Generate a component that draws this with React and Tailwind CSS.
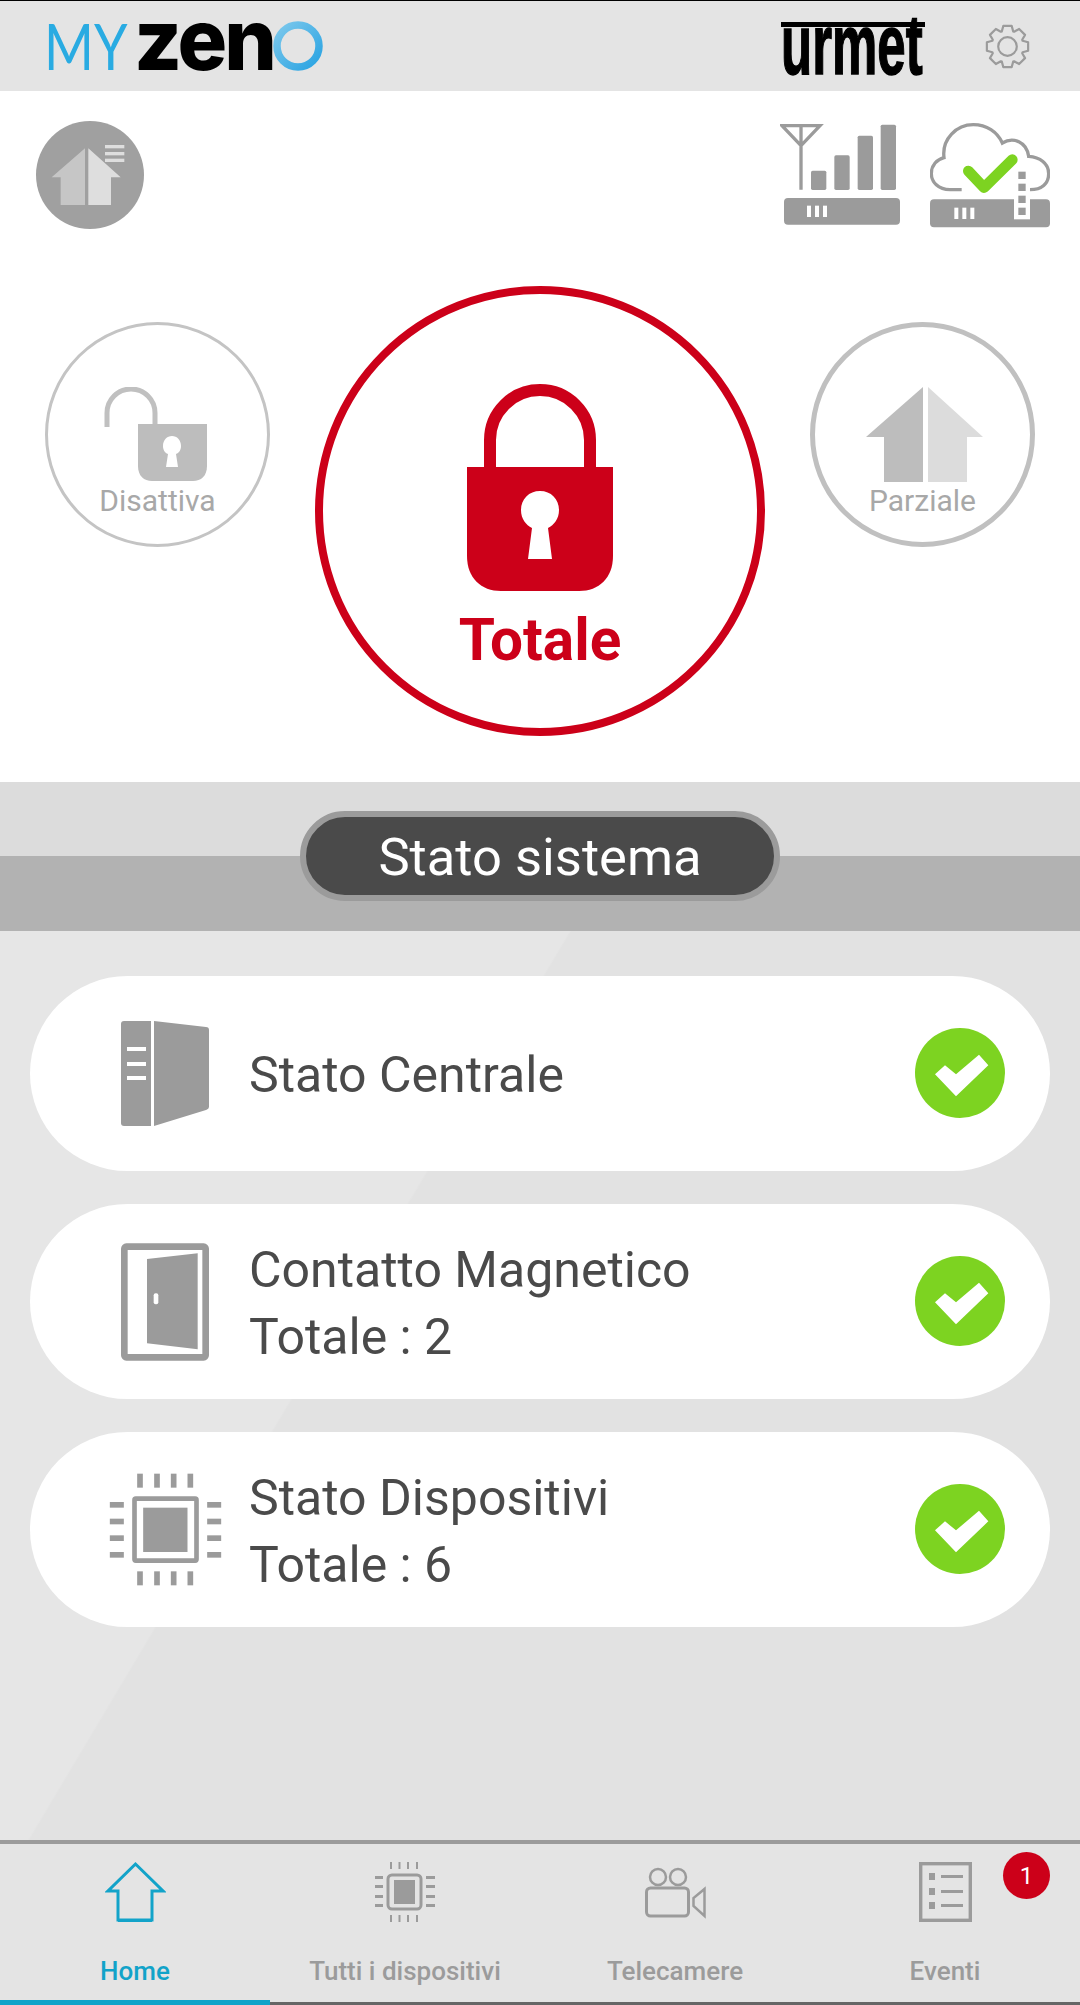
import React from 'react';

const GRAY = '#9b9b9b';
const RED = '#cc0019';

// gear outline, 8 teeth
const gearPoints = () => {
  const pts = [];
  for (let i = 0; i < 8; i++) {
    const a = (i * Math.PI) / 4 - Math.PI / 2;
    const step = [
      [-0.36, 16.5],
      [-0.2, 21.5],
      [0.2, 21.5],
      [0.36, 16.5],
    ];
    step.forEach(([d, r]) => {
      pts.push(`${(24 + r * Math.cos(a + d)).toFixed(2)},${(24 + r * Math.sin(a + d)).toFixed(2)}`);
    });
  }
  return pts.join(' ');
};

const Logo = () => (
  <div className="flex items-center">
    <span className="block w-[90px] origin-left scale-x-[0.84] font-['Lato',sans-serif] text-[64px] leading-none text-[#29abe2] whitespace-nowrap">MY</span>
    <span className="block w-[139px] origin-left scale-x-[0.975] font-['Inter',sans-serif] font-extrabold text-[85px] leading-none tracking-[-3px] text-black -mt-[13px] whitespace-nowrap">zen</span>
    <svg viewBox="0 0 50 50" className="w-[50px] h-[50px]">
      <defs>
        <linearGradient id="ring" x1="0" y1="0" x2="1" y2="1">
          <stop offset="0" stopColor="#7cc8ec" />
          <stop offset="1" stopColor="#29a3e2" />
        </linearGradient>
      </defs>
      <circle cx="25" cy="25" r="21" fill="none" stroke="url(#ring)" strokeWidth="7.5" />
    </svg>
  </div>
);

const UrmetLogo = () => (
  <div className="relative w-[148px] h-[62px]">
    <div className="absolute left-0 top-[7px] w-[144px] h-[5px] bg-black" />
    <span className="absolute left-0 bottom-[-10px] origin-bottom-left scale-x-[0.6] font-['Liberation_Sans',sans-serif] font-bold text-[85px] leading-none text-black whitespace-nowrap [-webkit-text-stroke:1.5px_black]">
      urmet
    </span>
  </div>
);

const HomeBadge = () => (
  <svg viewBox="48 363 324 324" className="w-[108px] h-[108px]">
    <circle cx="210" cy="525" r="162" fill="#a0a0a0" />
    <polygon points="195,445 95,532 122,532 122,615 195,615" fill="#c6c6c6" />
    <polygon points="205,445 302,532 273,532 273,615 205,615" fill="#dedede" />
    <rect x="255" y="435" width="58" height="10" fill="#dedede" />
    <rect x="255" y="456" width="58" height="10" fill="#dedede" />
    <rect x="255" y="476" width="58" height="10" fill="#dedede" />
  </svg>
);

const SignalIcon = () => (
  <svg viewBox="60 70 360 315" className="w-[120px] h-[105px]">
    <path d="M66 78 H180 L123 138 Z M123 78 V270" fill="none" stroke={GRAY} strokeWidth="10" />
    <rect x="153" y="213" width="46" height="58" rx="5" fill={GRAY} />
    <rect x="223" y="167" width="46" height="104" rx="5" fill={GRAY} />
    <rect x="293" y="108" width="46" height="163" rx="5" fill={GRAY} />
    <rect x="362" y="75" width="46" height="196" rx="5" fill={GRAY} />
    <rect x="72" y="295" width="348" height="80" rx="12" fill={GRAY} />
    <rect x="141" y="318" width="12" height="34" fill="#fff" />
    <rect x="165" y="318" width="12" height="34" fill="#fff" />
    <rect x="189" y="318" width="12" height="34" fill="#fff" />
  </svg>
);

const CloudIcon = () => (
  <svg viewBox="510 68 360 315" className="w-[120px] h-[105px]">
    <path
      d="M605 268 H570 C535 268 514 245 514 220 C514 195 530 178 552 172 C545 115 590 73 640 73 C680 73 712 95 727 128 C760 108 800 125 806 168 C840 170 866 190 866 220 C866 250 845 268 810 268"
      fill="none"
      stroke={GRAY}
      strokeWidth="10"
    />
    <rect x="510" y="297" width="360" height="84" rx="12" fill={GRAY} />
    <rect x="583" y="322" width="12" height="34" fill="#fff" />
    <rect x="607" y="322" width="12" height="34" fill="#fff" />
    <rect x="631" y="322" width="12" height="34" fill="#fff" />
    <path d="M625 212 L672 262 L757 178" fill="none" stroke="#7dd321" strokeWidth="32" strokeLinejoin="round" strokeLinecap="round" />
    <rect x="762" y="205" width="48" height="152" fill="#fff" />
    <rect x="775" y="214" width="22" height="22" fill={GRAY} />
    <rect x="775" y="250" width="22" height="22" fill={GRAY} />
    <rect x="775" y="286" width="22" height="22" fill={GRAY} />
    <rect x="775" y="322" width="22" height="22" fill={GRAY} />
  </svg>
);

const BigLock = () => (
  <svg viewBox="468 384 146 207" className="w-[146px] h-[207px]">
    <path d="M491 470 V440 A50 50 0 0 1 591 440 V470" fill="none" stroke={RED} strokeWidth="12" />
    <path d="M468 467 H614 V556 C614 578 600 591 580 591 H502 C482 591 468 578 468 556 Z" fill={RED} />
    <path d="M541 491 C530 491 522 499 522 510 C522 519 527 525 533 528 L529 559 H553 L549 528 C555 525 560 519 560 510 C560 499 552 491 541 491 Z" fill="#fff" />
  </svg>
);

const OpenLock = () => (
  <svg viewBox="49 387 217 96" className="w-[217px] h-[96px]">
    <path d="M107 427 V413 A24 24 0 0 1 155 413 V426" fill="none" stroke="#c0c0c0" strokeWidth="5" />
    <path d="M138 424 H207 V466 C207 476 201 481 193 481 H152 C144 481 138 476 138 466 Z" fill="#bdbdbd" />
    <path d="M172 436 C167 436 163 440 163 446 C163 450 165 453 168 454 L166 467 H178 L176 454 C179 453 181 450 181 446 C181 440 177 436 172 436 Z" fill="#fff" />
  </svg>
);

const HalfHouse = () => (
  <svg viewBox="816 387 213 96" className="w-[213px] h-[96px]">
    <polygon points="923,387 866,437 884,437 884,482 923,482" fill="#bdbdbd" />
    <polygon points="928,387 983,437 967,437 967,482 928,482" fill="#dcdcdc" />
  </svg>
);

const ServerIcon = () => (
  <svg viewBox="121 1021 88 105" className="w-[88px] h-[105px]">
    <path d="M124 1021 H151 V1126 H124 Q121 1126 121 1123 V1024 Q121 1021 124 1021 Z" fill={GRAY} />
    <path d="M154 1021 L206 1027 Q209 1027 209 1030 V1107 Q209 1109 206 1110 L154 1126 Z" fill={GRAY} />
    <rect x="127" y="1047" width="19" height="4" fill="#fff" />
    <rect x="127" y="1062" width="19" height="4" fill="#fff" />
    <rect x="127" y="1076" width="19" height="4" fill="#fff" />
  </svg>
);

const DoorIcon = () => (
  <svg viewBox="124 187 264 354" className="w-[88px] h-[118px]">
    <rect x="134" y="198" width="244" height="332" rx="6" fill="none" stroke={GRAY} strokeWidth="20" />
    <polygon points="202,235 354,218 354,506 202,488" fill={GRAY} />
    <rect x="222" y="338" width="14" height="33" rx="6" fill="#fff" />
  </svg>
);

const ChipIcon = () => {
  const xs = [172, 223, 273, 323];
  const ys = [965, 1015, 1065, 1115];
  return (
    <svg viewBox="88 878 338 339" className="w-[113px] h-[113px]">
      <rect x="164" y="955" width="186" height="186" rx="4" fill="none" stroke={GRAY} strokeWidth="14" />
      <rect x="190" y="982" width="133" height="133" fill={GRAY} />
      {xs.map((x) => (
        <React.Fragment key={x}>
          <rect x={x} y="880" width="17" height="42" fill={GRAY} />
          <rect x={x} y="1173" width="17" height="42" fill={GRAY} />
        </React.Fragment>
      ))}
      {ys.map((y) => (
        <React.Fragment key={y}>
          <rect x="90" y={y} width="42" height="17" fill={GRAY} />
          <rect x="382" y={y} width="42" height="17" fill={GRAY} />
        </React.Fragment>
      ))}
    </svg>
  );
};

const CheckBadge = () => (
  <svg viewBox="105 83 270 270" className="w-[90px] h-[90px] shrink-0 -mt-[2px]">
    <circle cx="240" cy="218" r="135" fill="#7dd321" />
    <polygon points="165,222 195,195 228,222 297,163 325,195 228,288" fill="#fff" />
  </svg>
);

const StatusRow = ({ icon, lines }) => (
  <div className="flex items-center h-[195px] rounded-[98px] bg-white pl-[70px] pr-[45px]">
    <div className="w-[130px] flex items-center justify-center shrink-0">{icon}</div>
    <div className="ml-[19px] flex-1 pt-[4px] text-[50px] leading-[67px] text-[#4a4a4a]">
      {lines.map((l) => (
        <div key={l}>{l}</div>
      ))}
    </div>
    <CheckBadge />
  </div>
);

const NavHome = () => (
  <svg viewBox="105 1861 61 62" className="w-[61px] h-[62px]">
    <path d="M135.5 1864 L108 1891 H118 V1920 H152 V1891 H163 Z" fill="none" stroke="#12a3c9" strokeWidth="3" />
    <rect x="118" y="1919" width="34" height="3" fill="#12a3c9" />
  </svg>
);

const NavChip = () => {
  const xs = [390, 398.5, 407, 416];
  const ys = [1876, 1885, 1895, 1904];
  return (
    <svg viewBox="375 1862 60 60" className="w-[60px] h-[60px]">
      <rect x="388" y="1875" width="33" height="34" rx="4" fill="none" stroke={GRAY} strokeWidth="3" />
      <rect x="394" y="1880" width="21" height="24" fill={GRAY} />
      {xs.map((x) => (
        <React.Fragment key={x}>
          <rect x={x} y="1862" width="2" height="7" fill={GRAY} />
          <rect x={x} y="1915" width="2" height="7" fill={GRAY} />
        </React.Fragment>
      ))}
      {ys.map((y) => (
        <React.Fragment key={y}>
          <rect x="375" y={y} width="8" height="3" fill={GRAY} />
          <rect x="426" y={y} width="9" height="3" fill={GRAY} />
        </React.Fragment>
      ))}
    </svg>
  );
};

const NavCamera = () => (
  <svg viewBox="645 1862 61 60" className="w-[61px] h-[60px]">
    <circle cx="658" cy="1877" r="8" fill="none" stroke={GRAY} strokeWidth="2.5" />
    <circle cx="678" cy="1877" r="8" fill="none" stroke={GRAY} strokeWidth="2.5" />
    <rect x="646.5" y="1888" width="42" height="28" rx="4" fill="none" stroke={GRAY} strokeWidth="3" />
    <path d="M704.5 1889 V1916 L693.5 1906 V1898 Z" fill="none" stroke={GRAY} strokeWidth="2.5" />
  </svg>
);

const NavEvents = () => (
  <svg viewBox="918 1862 53 60" className="w-[53px] h-[60px]">
    <rect x="919.7" y="1863.7" width="49.6" height="56.6" fill="none" stroke={GRAY} strokeWidth="3.4" />
    {[1873, 1888, 1902].map((y) => (
      <React.Fragment key={y}>
        <rect x="928" y={y} width="6" height="7" fill={GRAY} />
        <rect x="940" y={y + 2} width="22" height="3" fill={GRAY} />
      </React.Fragment>
    ))}
  </svg>
);

const tabs = [
  { label: 'Home', icon: <NavHome />, active: true },
  { label: 'Tutti i dispositivi', icon: <NavChip /> },
  { label: 'Telecamere', icon: <NavCamera /> },
  { label: 'Eventi', icon: <NavEvents />, badge: '1' },
];

export default function App() {
  return (
    <div className="flex flex-col w-[1080px] h-[2005px] overflow-hidden bg-white font-['Roboto',sans-serif]">
      {/* header */}
      <header className="flex items-center h-[91px] shrink-0 border-t border-black bg-[#e4e4e4] pl-[44px] pr-[49px]">
        <Logo />
        <div className="ml-auto flex items-center gap-[60px]">
          <UrmetLogo />
          <svg viewBox="0 0 48 48" className="w-[47px] h-[47px] -ml-[5px]">
            <polygon points={gearPoints()} fill="none" stroke={GRAY} strokeWidth="2.2" strokeLinejoin="round" />
            <circle cx="24" cy="24" r="9.5" fill="none" stroke={GRAY} strokeWidth="2.2" />
          </svg>
        </div>
      </header>

      {/* arm / disarm */}
      <section className="h-[691px] shrink-0 bg-white">
        <div className="flex items-start justify-between pt-[30px] pl-[36px] pr-[30px]">
          <HomeBadge />
          <div className="flex gap-[30px] mt-[2px]">
            <SignalIcon />
            <CloudIcon />
          </div>
        </div>
        <div className="flex items-start justify-between mt-[57px] px-[45px]">
          <div className="flex flex-col items-center w-[225px] h-[225px] mt-[36px] pt-[62px] rounded-full border-[3px] border-[#c4c4c4]">
            <OpenLock />
            <span className="mt-[2px] text-[30px] leading-[32px] text-[#a8a8a8]">Disattiva</span>
          </div>
          <div className="flex flex-col items-center w-[450px] h-[450px] pt-[90px] rounded-full border-[8px] border-[#cc0019]">
            <BigLock />
            <span className="mt-[14px] text-[58.5px] leading-[70px] font-bold text-[#cc0019]">Totale</span>
          </div>
          <div className="flex flex-col items-center w-[225px] h-[225px] mt-[36px] pt-[60px] rounded-full border-[5px] border-[#c0c0c0]">
            <HalfHouse />
            <span className="mt-[2px] text-[30px] leading-[32px] text-[#a8a8a8]">Parziale</span>
          </div>
        </div>
      </section>

      {/* section title */}
      <div className="relative shrink-0">
        <div className="h-[74px] bg-[#dcdcdc]" />
        <div className="h-[75px] bg-[#b2b2b2]" />
        <div className="absolute left-[300px] top-[29px] flex items-center justify-center w-[480px] h-[90px] pt-[2px] rounded-full border-[6px] border-[#9b9b9b] bg-[#4a4a4a] text-[52.5px] text-white">
          Stato sistema
        </div>
      </div>

      {/* status list */}
      <main className="flex flex-1 flex-col gap-[33px] bg-[linear-gradient(120.8deg,#e6e6e6_489px,#e2e2e2_491px)] px-[30px] pt-[45px]">
        <StatusRow icon={<ServerIcon />} lines={['Stato Centrale']} />
        <StatusRow icon={<DoorIcon />} lines={['Contatto Magnetico', 'Totale : 2']} />
        <StatusRow icon={<ChipIcon />} lines={['Stato Dispositivi', 'Totale : 6']} />
      </main>

      {/* bottom nav */}
      <nav className="grid grid-cols-4 h-[165px] shrink-0 border-t-[4px] border-[#9b9b9b] bg-[#e4e4e4]">
        {tabs.map((t) => (
          <div
            key={t.label}
            className={`relative flex flex-col items-center pt-[18px] ${t.active ? 'border-b-[5px] border-[#12a3c9]' : 'border-b-[3px] border-[#666666]'}`}
          >
            <div className="h-[60px] flex items-center">{t.icon}</div>
            <span className={`mt-[34px] text-[26px] leading-[30px] font-medium ${t.active ? 'text-[#12a3c9]' : 'text-[#9b9b9b]'}`}>
              {t.label}
            </span>
            {t.badge && (
              <span className="absolute right-[30px] top-[8px] flex items-center justify-center w-[47px] h-[47px] rounded-full bg-[#cc0019] text-[24px] text-white">
                {t.badge}
              </span>
            )}
          </div>
        ))}
      </nav>
    </div>
  );
}
